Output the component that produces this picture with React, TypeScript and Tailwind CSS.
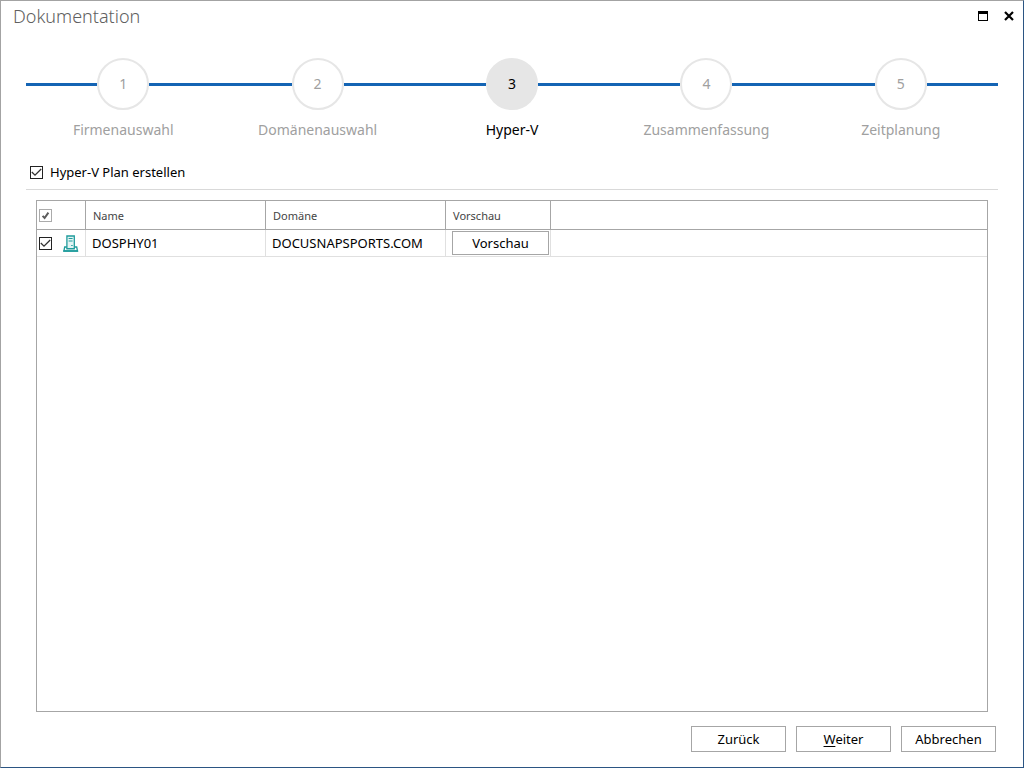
import React, { useState } from 'react';
import clsx from 'clsx';

const steps = ['Firmenauswahl', 'Domänenauswahl', 'Hyper-V', 'Zusammenfassung', 'Zeitplanung'];

const hosts = [{ name: 'DOSPHY01', domain: 'DOCUSNAPSPORTS.COM' }];

interface CheckBoxProps {
  id: string;
  label?: string;
  muted?: boolean;
  checked: boolean;
  onChange: (checked: boolean) => void;
}

function CheckBox({ id, label, muted, checked, onChange }: CheckBoxProps) {
  return (
    <span className="grid h-[13px] w-[13px] shrink-0">
      <input
        id={id}
        type="checkbox"
        aria-label={label}
        checked={checked}
        onChange={(e) => onChange(e.target.checked)}
        className={clsx(
          'col-start-1 row-start-1 h-[13px] w-[13px] appearance-none border bg-white',
          muted ? 'border-[#ababab]' : 'border-[#222222]'
        )}
      />
      {checked && (
        <svg
          viewBox="0 0 13 13"
          fill="none"
          className={clsx(
            'pointer-events-none col-start-1 row-start-1 h-[13px] w-[13px]',
            muted ? 'stroke-[#5c5c5c]' : 'stroke-[#333333]'
          )}
        >
          {muted ? (
            <path d="M3.6 6.8 5.6 9 9.4 3.6" strokeWidth={2} />
          ) : (
            <path d="M1.8 6 5 9.2 11.2 3" strokeWidth={1.3} />
          )}
        </svg>
      )}
    </span>
  );
}

function ServerIcon() {
  return (
    <svg viewBox="0 0 16 17" fill="none" className="h-[17px] w-4 shrink-0" aria-hidden="true">
      <path d="M3.9 13.4V1h7.4v12.4" fill="#e3f4f4" stroke="#1f9c9c" strokeWidth={1.3} />
      <path d="M5.6 3.5h4M5.6 6h4" stroke="#1f9c9c" strokeWidth={1.2} />
      <path d="M8.2 10.5h1.5" stroke="#1f9c9c" />
      <path d="M3.9 12H1.7L.9 16h13.6l-.8-4h-2.4" stroke="#1f9c9c" strokeWidth={1.3} />
      <path d="M3.3 13.7h8.6M.3 16h14.8" stroke="#1f9c9c" strokeWidth={1.5} />
    </svg>
  );
}

function Stepper({ current }: { current: number }) {
  return (
    <ol className="grid grid-cols-5">
      {steps.map((step, index) => {
        const active = index === current;
        return (
          <li
            key={step}
            aria-current={active ? 'step' : undefined}
            className={clsx('flex flex-col items-center', active ? 'text-black' : 'text-[#a0a0a0]')}
          >
            <div className="flex w-full items-center">
              <span className="h-[3px] flex-1 bg-[#1464b4]" />
              <span
                className={clsx(
                  'flex h-[52px] w-[52px] items-center justify-center rounded-full border-2 border-[#e6e6e6] text-sm',
                  active ? 'bg-[#e6e6e6]' : 'bg-white'
                )}
              >
                {index + 1}
              </span>
              <span className="h-[3px] flex-1 bg-[#1464b4]" />
            </div>
            <span className="mt-[10px] text-sm leading-5">{step}</span>
          </li>
        );
      })}
    </ol>
  );
}

export default function App() {
  const [createPlan, setCreatePlan] = useState(true);
  const [selected, setSelected] = useState<string[]>(hosts.map((host) => host.name));

  const toggleHost = (name: string, checked: boolean) => {
    setSelected(checked ? [...selected, name] : selected.filter((item) => item !== name));
  };

  return (
    <div className="flex min-h-screen flex-col border border-t-[#a3a3a3] border-r-[#2b5583] border-b-[#2b5583] border-l-[#a3a3a3] bg-white font-['Noto_Sans',sans-serif] text-black">
      {/* Title bar */}
      <header className="flex h-[30px] items-center justify-between pl-3 pr-[9px]">
        <h1 className="text-lg font-light text-[#606060]">Dokumentation</h1>
        <div className="flex items-center gap-4">
          <button type="button" aria-label="Maximieren">
            <svg viewBox="0 0 10 10" className="h-[10px] w-[10px]" shapeRendering="crispEdges">
              <path d="M0 0h10v10H0zM1 3v6h8V3z" fillRule="evenodd" />
            </svg>
          </button>
          <button type="button" aria-label="Schließen">
            <svg viewBox="0 0 10 10" className="h-[10px] w-[10px]" stroke="black" strokeWidth={2.2}>
              <path d="M1 1l8 8M9 1l-8 8" />
            </svg>
          </button>
        </div>
      </header>

      <main className="flex flex-1 flex-col px-[25px] pt-[27px]">
        <Stepper current={2} />

        <div className="mt-5 flex h-[30px] items-center gap-[7px] border-b border-[#d9d9d9] pl-1 pb-[5px]">
          <CheckBox id="create-plan" checked={createPlan} onChange={setCreatePlan} />
          <label htmlFor="create-plan" className="text-[13px] leading-5">
            Hyper-V Plan erstellen
          </label>
        </div>

        {/* Hosts */}
        <div className="mx-[10px] mt-[10px] flex-1 border border-[#a6a6a6]">
          <table className="w-full table-fixed border-separate border-spacing-0 text-left">
            <colgroup>
              <col className="w-[49px]" />
              <col className="w-[180px]" />
              <col className="w-[180px]" />
              <col className="w-[105px]" />
              <col />
            </colgroup>
            <thead>
              <tr className="h-[29px] text-[11px] text-[#444444] [&>th]:border-b [&>th]:border-[#a6a6a6] [&>th]:p-0 [&>th]:font-normal">
                <th className="border-r">
                  <div className="pl-[2px]">
                    <CheckBox
                      id="select-all"
                      label="Alle auswählen"
                      muted
                      checked={selected.length === hosts.length}
                      onChange={(checked) => setSelected(checked ? hosts.map((host) => host.name) : [])}
                    />
                  </div>
                </th>
                <th className="border-r"><div className="pt-[2px] pl-[7px]">Name</div></th>
                <th className="border-r"><div className="pt-[2px] pl-[7px]">Domäne</div></th>
                <th className="border-r"><div className="pt-[2px] pl-[7px]">Vorschau</div></th>
                <th />
              </tr>
            </thead>
            <tbody>
              {hosts.map((host) => (
                <tr
                  key={host.name}
                  className="h-[27px] text-[13px] [&>td]:border-b [&>td]:border-[#e0e0e0] [&>td]:p-0"
                >
                  <td className="border-r">
                    <div className="flex items-center gap-[11px] pl-[2px]">
                      <CheckBox
                        id={`host-${host.name}`}
                        label={host.name}
                        checked={selected.includes(host.name)}
                        onChange={(checked) => toggleHost(host.name, checked)}
                      />
                      <ServerIcon />
                    </div>
                  </td>
                  <td className="border-r"><div className="pt-[2px] pl-[6px]">{host.name}</div></td>
                  <td className="border-r"><div className="pt-[2px] pl-[6px]">{host.domain}</div></td>
                  <td className="border-r">
                    <div className="flex pl-[6px]">
                      <button type="button" className="h-6 w-[97px] border border-[#a6a6a6] bg-white leading-5">
                        Vorschau
                      </button>
                    </div>
                  </td>
                  <td />
                </tr>
              ))}
            </tbody>
          </table>
        </div>
      </main>

      {/* Actions */}
      <footer className="flex justify-end gap-[10px] pt-[14px] pr-[27px] pb-[15px] text-[13px]">
        <button type="button" className="h-[26px] w-[95px] border border-[#a6a6a6] bg-white pt-px">
          Zurück
        </button>
        <button type="button" className="h-[26px] w-[95px] border border-[#a6a6a6] bg-white pt-px">
          <span className="underline underline-offset-2">W</span>eiter
        </button>
        <button type="button" className="h-[26px] w-[95px] border border-[#a6a6a6] bg-white pt-px">
          Abbrechen
        </button>
      </footer>
    </div>
  );
}
